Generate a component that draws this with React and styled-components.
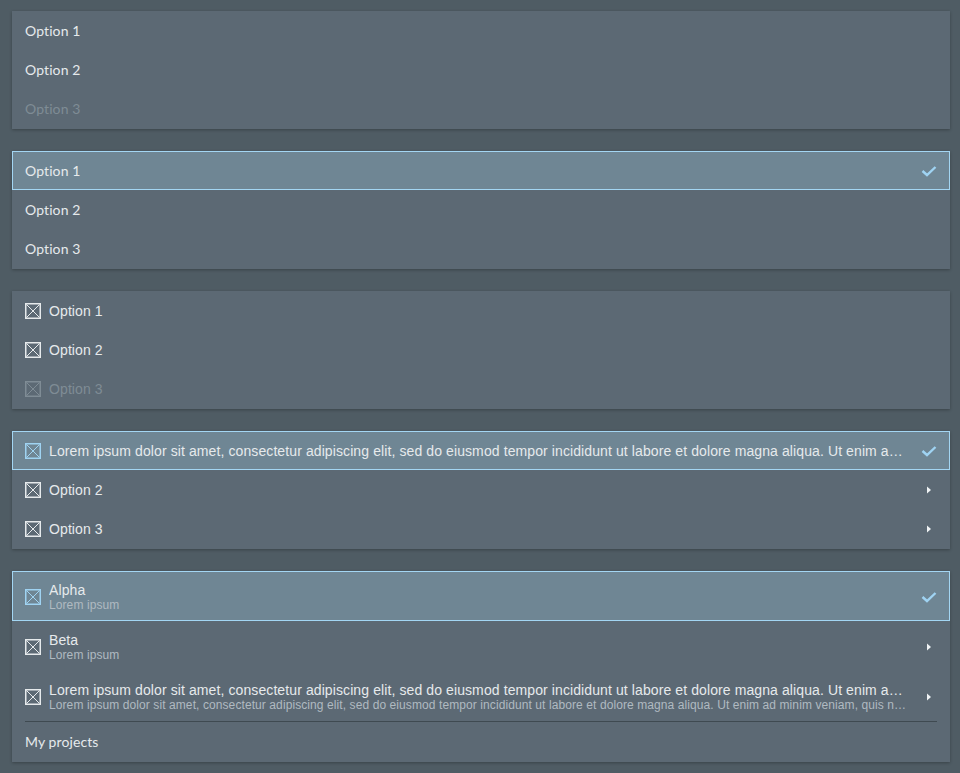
import React from 'react';
import styled, { createGlobalStyle } from 'styled-components';

const Global = createGlobalStyle`
  html, body { margin: 0; padding: 0; background: #4f5c64; }
  body { font-family: "Liberation Sans", Arial, sans-serif; }
`;

const Page = styled.div`
  padding: 11px 10px 11px 12px;
  display: flex;
  flex-direction: column;
  gap: 22px;
`;

const Panel = styled.div`
  background: #5c6974;
  box-shadow: 0 1px 3px rgba(0, 0, 0, 0.28);
  display: flex;
  flex-direction: column;
  padding-bottom: 1px;
`;

const Row = styled.div`
  display: flex;
  align-items: center;
  gap: 8px;
  height: ${p => (p.$tall ? 50 : 39)}px;
  box-sizing: border-box;
  padding: ${p => (p.$tall ? '2px' : p.$box ? '1px' : '0')} 12px 0 12px;
  border: 1px solid ${p => (p.$selected ? '#a3d6f3' : 'transparent')};
  background: ${p => (p.$selected ? '#6f8694' : 'transparent')};
  color: ${p => (p.$disabled ? '#7f8c95' : '#e6eaec')};
  font-family: ${p => (p.$lato ? 'Lato, "Liberation Sans", sans-serif' : '"Liberation Sans", Arial, sans-serif')};
  font-size: 14px;
`;

const Label = styled.div`
  flex: 1;
  min-width: 0;
  display: flex;
  flex-direction: column;
`;

const Title = styled.span`
  white-space: nowrap;
  overflow: hidden;
  text-overflow: ellipsis;
  line-height: 17px;
  letter-spacing: 0.1px;
`;

const Sub = styled.span`
  white-space: nowrap;
  overflow: hidden;
  text-overflow: ellipsis;
  font-size: 12px;
  line-height: 13px;
  color: #b0bac1;
  letter-spacing: 0.09px;
`;

const Trail = styled.span`
  width: 16px;
  display: flex;
  justify-content: center;
  margin-left: 5px;
`;

const Divider = styled.div`
  height: 1px;
  margin: 0 13px;
  background: #3f4a51;
`;

const Box = ({ color }) => (
  <svg width="16" height="16" viewBox="0 0 16 16" style={{ flex: 'none' }}>
    <rect x="0.75" y="0.75" width="14.5" height="14.5" fill="none" stroke={color} strokeWidth="1.5" />
    <path d="M1.5 1.5 L14.5 14.5 M14.5 1.5 L1.5 14.5" stroke={color} strokeWidth="1" />
  </svg>
);

const Check = () => (
  <svg width="16" height="12" viewBox="0 0 16 12">
    <path d="M1.5 6 L6 10 L14.5 2" fill="none" stroke="#9fd3f2" strokeWidth="2.4" />
  </svg>
);

const Arrow = () => (
  <svg width="6" height="8" viewBox="0 0 6 8">
    <path d="M1 0.5 L5 4 L1 7.5 Z" fill="#f0f3f5" />
  </svg>
);

const LONG = 'Lorem ipsum dolor sit amet, consectetur adipiscing elit, sed do eiusmod tempor incididunt ut labore et dolore magna aliqua. Ut enim ad minim veniam, quis nostrud exercitation ullamco laboris nisi ut aliquip ex ea commodo consequat.';

const boxColor = (sel, dis) => (sel ? '#9fd3f2' : dis ? '#7f8c95' : '#e6eaec');

export default function App() {
  return (
    <Page>
      <Global />
      <Panel>
        <Row $lato><Label><Title>Option 1</Title></Label></Row>
        <Row $lato><Label><Title>Option 2</Title></Label></Row>
        <Row $lato $disabled><Label><Title>Option 3</Title></Label></Row>
      </Panel>
      <Panel>
        <Row $lato $selected><Label><Title>Option 1</Title></Label><Trail><Check /></Trail></Row>
        <Row $lato><Label><Title>Option 2</Title></Label></Row>
        <Row $lato><Label><Title>Option 3</Title></Label></Row>
      </Panel>
      <Panel>
        <Row $box><Box color={boxColor()} /><Label><Title>Option 1</Title></Label></Row>
        <Row $box><Box color={boxColor()} /><Label><Title>Option 2</Title></Label></Row>
        <Row $box $disabled><Box color={boxColor(false, true)} /><Label><Title>Option 3</Title></Label></Row>
      </Panel>
      <Panel>
        <Row $box $selected><Box color={boxColor(true)} /><Label><Title>{LONG}</Title></Label><Trail><Check /></Trail></Row>
        <Row $box><Box color={boxColor()} /><Label><Title>Option 2</Title></Label><Trail><Arrow /></Trail></Row>
        <Row $box><Box color={boxColor()} /><Label><Title>Option 3</Title></Label><Trail><Arrow /></Trail></Row>
      </Panel>
      <Panel>
        <Row $tall $selected><Box color={boxColor(true)} /><Label><Title>Alpha</Title><Sub>Lorem ipsum</Sub></Label><Trail><Check /></Trail></Row>
        <Row $tall><Box color={boxColor()} /><Label><Title>Beta</Title><Sub>Lorem ipsum</Sub></Label><Trail><Arrow /></Trail></Row>
        <Row $tall><Box color={boxColor()} /><Label><Title>{LONG}</Title><Sub>{LONG}</Sub></Label><Trail><Arrow /></Trail></Row>
        <Divider />
        <Row $lato><Label><Title>My projects</Title></Label></Row>
      </Panel>
    </Page>
  );
}
